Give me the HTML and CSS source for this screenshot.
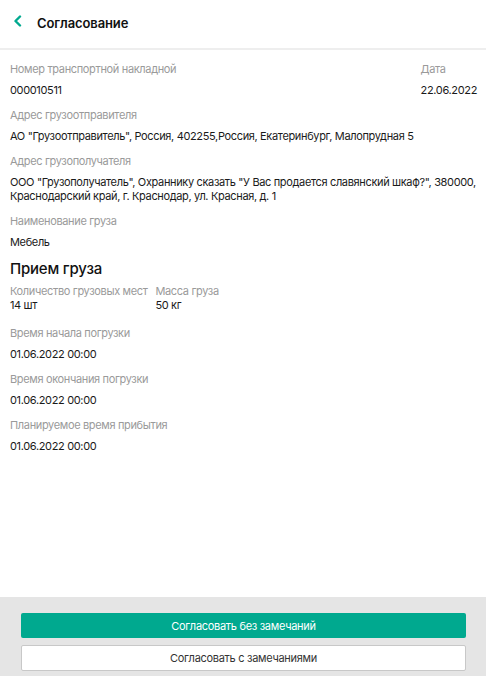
FILE: index.html
```html
<!DOCTYPE html>
<html lang="ru">
<head>
    <meta charset="UTF-8">
    <meta name="viewport" content="width=device-width, initial-scale=1.0">
    <title>Согласование</title>
    <link rel="stylesheet" href="styles.css">
</head>
<body>
    <div class="header">
        <svg class="back" width="10" height="12" viewBox="0 0 10 12">
            <path d="M7 1.5 L2.5 6 L7 10.5" fill="none" stroke="#00a98f" stroke-width="2.4" stroke-linecap="round" stroke-linejoin="round"/>
        </svg>
        <span class="title">Согласование</span>
    </div>

    <div class="content">
        <div class="row-split">
            <div class="field">
                <div class="label">Номер транспортной накладной</div>
                <div class="value">000010511</div>
            </div>
            <div class="field">
                <div class="label">Дата</div>
                <div class="value">22.06.2022</div>
            </div>
        </div>
        <div class="field">
            <div class="label">Адрес грузоотправителя</div>
            <div class="value">АО "Грузоотправитель", Россия, 402255,Россия, Екатеринбург, Малопрудная 5</div>
        </div>
        <div class="field">
            <div class="label">Адрес грузополучателя</div>
            <div class="value multiline">ООО "Грузополучатель", Охраннику сказать "У Вас продается славянский шкаф?", 380000, Краснодарский край, г. Краснодар, ул. Красная, д. 1</div>
        </div>
        <div class="field">
            <div class="label">Наименование груза</div>
            <div class="value">Мебель</div>
        </div>

        <h2 class="section">Прием груза</h2>
        <div class="row-inline">
            <div class="field compact">
                <div class="label">Количество грузовых мест</div>
                <div class="value">14 шт</div>
            </div>
            <div class="field compact">
                <div class="label">Масса груза</div>
                <div class="value">50 кг</div>
            </div>
        </div>
        <div class="field">
            <div class="label">Время начала погрузки</div>
            <div class="value">01.06.2022 00:00</div>
        </div>
        <div class="field">
            <div class="label">Время окончания погрузки</div>
            <div class="value">01.06.2022 00:00</div>
        </div>
        <div class="field">
            <div class="label">Планируемое время прибытия</div>
            <div class="value">01.06.2022 00:00</div>
        </div>
    </div>

    <div class="footer">
        <button class="btn btn-primary">Согласовать без замечаний</button>
        <button class="btn btn-secondary">Согласовать с замечаниями</button>
    </div>
</body>
</html>
```

FILE: styles.css
```css
* {
    box-sizing: border-box;
}

html, body {
    height: 100%;
}

body {
    margin: 0;
    background-color: white;
    font-family: Inter, "Noto Sans", sans-serif;
    color: #1a1a1a;
    display: flex;
    flex-direction: column;
}

.header {
    height: 50px;
    display: flex;
    align-items: center;
    padding: 0 0 2px 13px;
    border-bottom: 2px solid #eeeeee;
}

.back {
    margin-right: 14px;
    margin-top: -5px;
}

.title {
    font-size: 13px;
    font-weight: 600;
    color: #111;
    letter-spacing: -0.1px;
    margin-top: 0;
}

.content {
    flex: 1;
    padding: 12px 9px 0 10px;
}

.row-split {
    display: flex;
    justify-content: space-between;
}

.row-inline {
    display: flex;
    gap: 8px;
}

.field {
    margin-bottom: 11px;
}

.label {
    font-size: 11px;
    line-height: 14px;
    color: #9a9a9a;
    margin-bottom: 7px;
    letter-spacing: -0.35px;
}

.value {
    font-size: 11px;
    line-height: 14px;
    color: #1a1a1a;
    letter-spacing: -0.35px;
}

.value.multiline {
    margin-bottom: 1px;
}

.compact {
    margin-bottom: 14px;
}

.compact .label {
    margin-bottom: 0;
}

.section {
    font-size: 15px;
    font-weight: 500;
    line-height: 18px;
    margin: 3px 0 6px 0;
    color: #111;
    letter-spacing: -0.2px;
}

.footer {
    background-color: #e5e5e5;
    padding: 16px 20px 5px 21px;
    display: flex;
    flex-direction: column;
    gap: 7px;
}

.btn {
    height: 25px;
    font-family: Inter, "Noto Sans", sans-serif;
    font-size: 11px;
    letter-spacing: -0.3px;
    border-radius: 2px;
    cursor: pointer;
}

.btn-primary {
    background-color: #00a98f;
    color: white;
    border: none;
}

.btn-secondary {
    background-color: white;
    color: #333;
    border: 1px solid #c8c8c8;
    height: 26px;
}
```
